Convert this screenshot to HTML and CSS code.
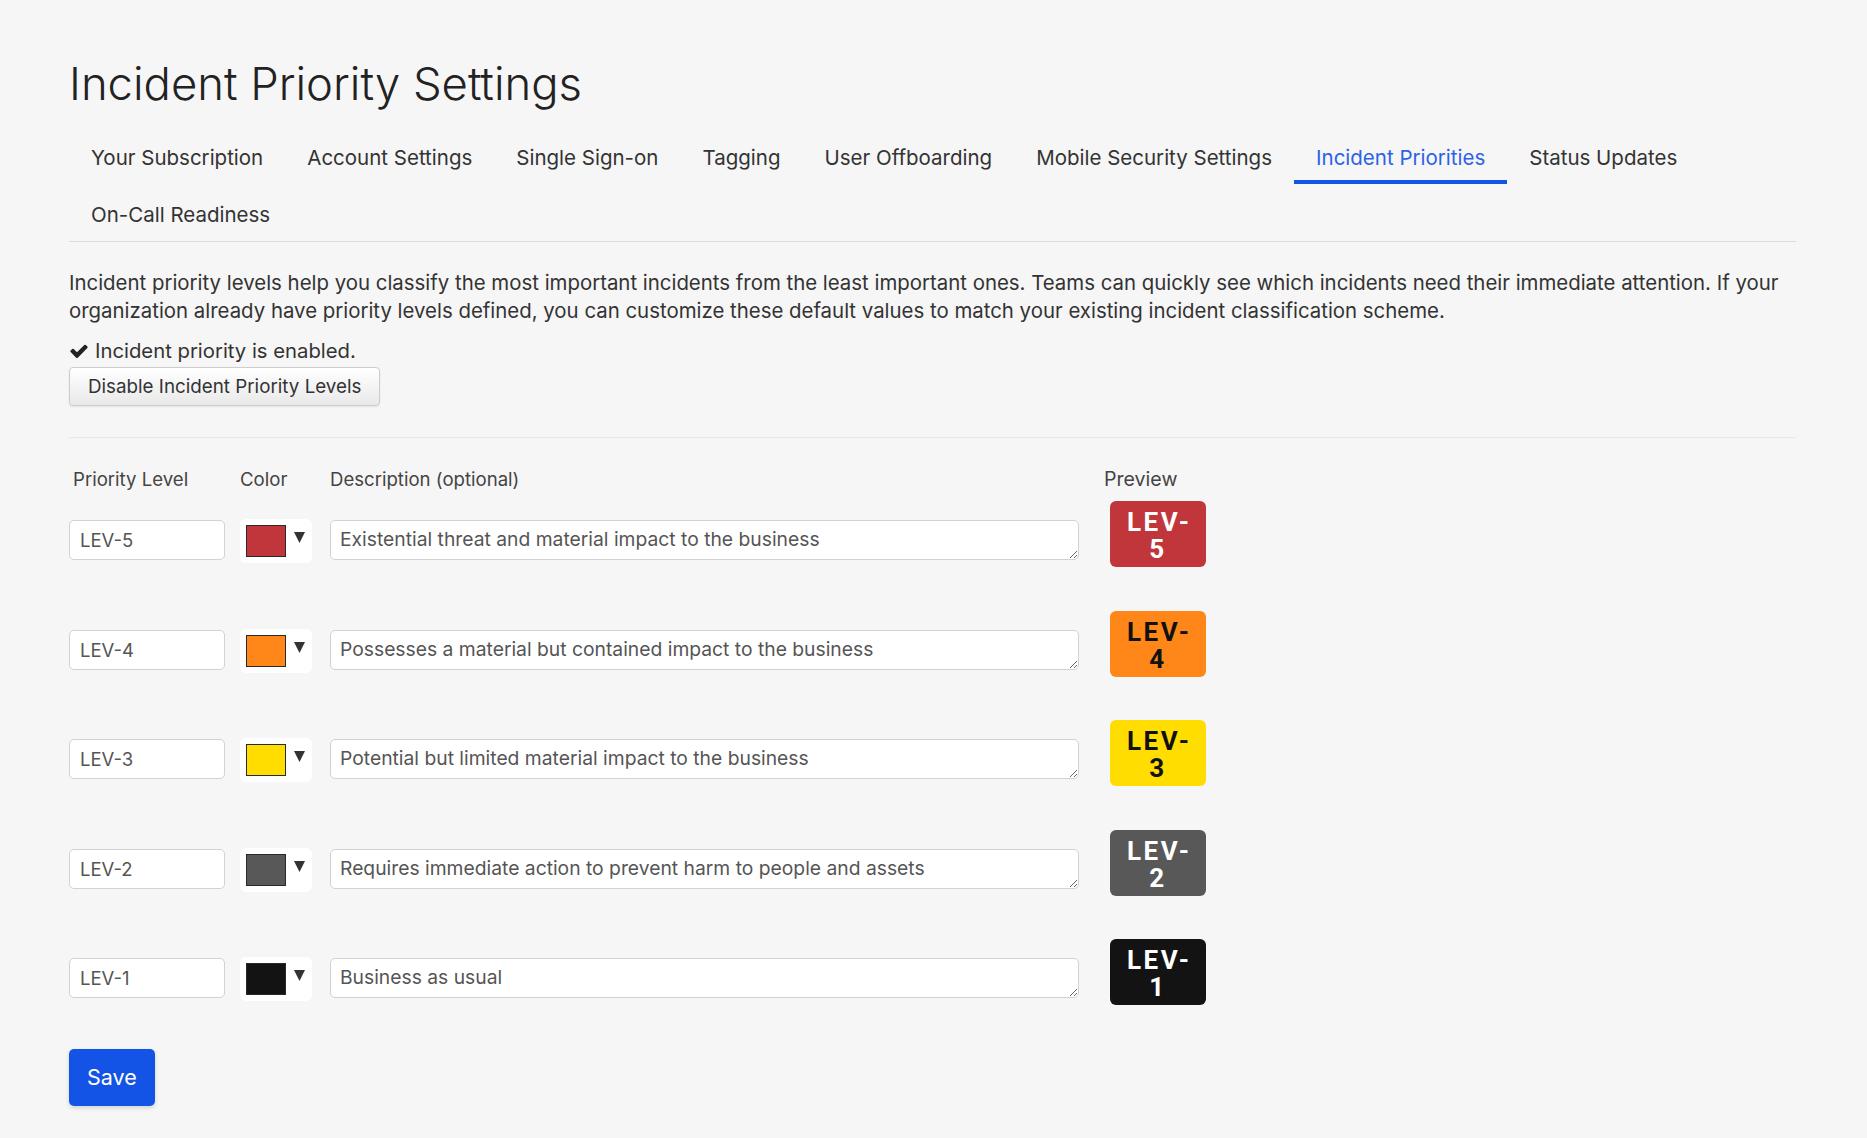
FILE: index.html
```html
<!DOCTYPE html>
<html lang="en">
<head>
<meta charset="utf-8">
<title>Incident Priority Settings</title>
<link rel="stylesheet" href="styles.css">
</head>
<body>
<div class="page">
  <h1 class="title">Incident Priority Settings</h1>
  <nav class="tabs">
    <a class="tab">Your Subscription</a>
    <a class="tab">Account Settings</a>
    <a class="tab">Single Sign-on</a>
    <a class="tab">Tagging</a>
    <a class="tab">User Offboarding</a>
    <a class="tab">Mobile Security Settings</a>
    <a class="tab active">Incident Priorities</a>
    <a class="tab">Status Updates</a>
    <a class="tab">On-Call Readiness</a>
  </nav>

  <p class="intro">Incident priority levels help you classify the most important incidents from the least important ones. Teams can quickly see which incidents need their immediate attention. If your organization already have priority levels defined, you can customize these default values to match your existing incident classification scheme.</p>

  <div class="status"><svg class="check" viewBox="0 0 1792 1792"><path d="M1671 566q0 40-28 68l-724 724-136 136q-28 28-68 28t-68-28l-136-136-362-362q-28-28-28-68t28-68l136-136q28-28 68-28t68 28l294 295 656-657q28-28 68-28t68 28l136 136q28 28 28 68z"/></svg><span>Incident priority is enabled.</span></div>
  <button class="btn-default">Disable Incident Priority Levels</button>

  <hr class="divider">

  <div class="levels">
    <div class="levels-head">
      <div class="cell-name head-name">Priority Level</div>
      <div class="cell-color">Color</div>
      <div class="cell-desc">Description (optional)</div>
      <div class="cell-preview head-preview">Preview</div>
    </div>

    <div class="level-row">
      <input class="name-input cell-name" value="LEV-5">
      <div class="picker cell-color"><span class="swatch swatch-red"></span><svg class="caret" viewBox="0 0 11 11"><polygon points="0,0 11,0 5.5,11"/></svg></div>
      <textarea class="desc-input cell-desc">Existential threat and material impact to the business</textarea>
      <div class="badge badge-red cell-preview">LEV-<br>5</div>
    </div>

    <div class="level-row">
      <input class="name-input cell-name" value="LEV-4">
      <div class="picker cell-color"><span class="swatch swatch-orange"></span><svg class="caret" viewBox="0 0 11 11"><polygon points="0,0 11,0 5.5,11"/></svg></div>
      <textarea class="desc-input cell-desc">Possesses a material but contained impact to the business</textarea>
      <div class="badge badge-orange cell-preview">LEV-<br>4</div>
    </div>

    <div class="level-row">
      <input class="name-input cell-name" value="LEV-3">
      <div class="picker cell-color"><span class="swatch swatch-yellow"></span><svg class="caret" viewBox="0 0 11 11"><polygon points="0,0 11,0 5.5,11"/></svg></div>
      <textarea class="desc-input cell-desc">Potential but limited material impact to the business</textarea>
      <div class="badge badge-yellow cell-preview">LEV-<br>3</div>
    </div>

    <div class="level-row">
      <input class="name-input cell-name" value="LEV-2">
      <div class="picker cell-color"><span class="swatch swatch-gray"></span><svg class="caret" viewBox="0 0 11 11"><polygon points="0,0 11,0 5.5,11"/></svg></div>
      <textarea class="desc-input cell-desc">Requires immediate action to prevent harm to people and assets</textarea>
      <div class="badge badge-gray cell-preview">LEV-<br>2</div>
    </div>

    <div class="level-row">
      <input class="name-input cell-name" value="LEV-1">
      <div class="picker cell-color"><span class="swatch swatch-black"></span><svg class="caret" viewBox="0 0 11 11"><polygon points="0,0 11,0 5.5,11"/></svg></div>
      <textarea class="desc-input cell-desc">Business as usual</textarea>
      <div class="badge badge-black cell-preview">LEV-<br>1</div>
    </div>
  </div>

  <button class="btn-primary">Save</button>
</div>
</body>
</html>
```

FILE: styles.css
```css
* { box-sizing: border-box; }
html, body { margin: 0; }
body {
  background: #f6f6f6;
  font-family: Inter, Roboto, "Liberation Sans", sans-serif;
  color: #333;
}
.page {
  padding: 57px 71px 40px 69px;
}
.title {
  margin: 0 0 16px;
  font-size: 45.4px;
  line-height: 54px;
  font-weight: 300;
  color: #222;
}
.tabs {
  display: flex;
  flex-wrap: wrap;
  border-bottom: 1px solid #dcdcdc;
}
.tab {
  padding: 17px 22px 9px;
  font-size: 20.5px;
  line-height: 27px;
  color: #333;
  border-bottom: 4px solid transparent;
  text-decoration: none;
  cursor: pointer;
}
.tab.active {
  color: #2c62e8;
  border-bottom-color: #1155e6;
}
.intro {
  margin: 27px 0 12px;
  font-size: 20.4px;
  line-height: 28px;
  color: #333;
}
.status {
  display: flex;
  align-items: center;
  gap: 6px;
  font-size: 20.3px;
  line-height: 28px;
}
.check {
  width: 20px;
  height: 20px;
  fill: #222;
  flex: none;
}
.btn-default {
  margin-top: 2px;
  height: 39px;
  padding: 0 18px;
  font-family: inherit;
  font-size: 18.8px;
  color: #333;
  background: linear-gradient(#ffffff, #e9e9e9);
  border: 1px solid #cdcdcd;
  border-radius: 4px;
  box-shadow: 0 1px 2px rgba(0,0,0,0.08);
}
.divider {
  margin: 31px 0 0;
  border: 0;
  border-top: 1px solid #e8e8e8;
}
.levels {
  margin-top: 28px;
}
.levels-head {
  display: flex;
  font-size: 18.6px;
  line-height: 27px;
  color: #444;
  margin-bottom: 8px;
}
.level-row {
  display: flex;
  align-items: flex-start;
  height: 109.5px;
}
.cell-name { width: 156px; flex: none; }
.cell-color { width: 72px; margin-left: 15px; flex: none; }
.cell-desc { width: 749px; margin-left: 18px; flex: none; }
.cell-preview { width: 96px; margin-left: 31px; flex: none; }
.head-name { padding-left: 4px; }
.head-preview { margin-left: 25px; font-size: 19.6px; }

.name-input {
  margin-top: 19px;
  height: 40px;
  padding: 0 10px;
  font-family: inherit;
  font-size: 18.5px;
  color: #555;
  background: #fff;
  border: 1px solid #d2d2d2;
  border-radius: 5px;
}
.picker {
  margin-top: 18px;
  height: 44px;
  padding: 6px;
  display: flex;
  align-items: flex-start;
  gap: 8px;
  background: #fff;
  border-radius: 6px;
}
.swatch {
  width: 40px;
  height: 32px;
  border: 1px solid #2a2a2a;
  flex: none;
}
.swatch-red { background: #c1363a; }
.swatch-orange { background: #ff8719; }
.swatch-yellow { background: #ffdd00; }
.swatch-gray { background: #585858; }
.swatch-black { background: #131313; }
.caret {
  width: 11px;
  height: 11px;
  margin-top: 7px;
  fill: #333;
  flex: none;
}
.desc-input {
  margin-top: 19px;
  height: 40px;
  padding: 7px 9px;
  font-family: inherit;
  font-size: 19.3px;
  line-height: 22px;
  color: #555;
  background: #fff;
  border: 1px solid #d2d2d2;
  border-radius: 5px;
  resize: vertical;
  overflow: hidden;
}
.badge {
  height: 66px;
  padding-top: 8px;
  border-radius: 6px;
  font-family: Roboto, "Liberation Sans", sans-serif;
  font-size: 26px;
  font-weight: 700;
  line-height: 27px;
  letter-spacing: 2.5px;
  text-indent: 2.5px;
  text-align: center;
}
.badge-red { background: #c1363a; color: #fff; }
.badge-orange { background: #ff8719; color: #111; }
.badge-yellow { background: #ffdd00; color: #111; }
.badge-gray { background: #585858; color: #fff; }
.badge-black { background: #131313; color: #fff; }

.btn-primary {
  display: block;
  height: 57px;
  padding: 0 18px;
  font-family: inherit;
  font-size: 21.5px;
  color: #fff;
  background: #1354e6;
  border: 0;
  border-radius: 5px;
  box-shadow: 0 2px 4px rgba(0,0,0,0.15);
}
```
